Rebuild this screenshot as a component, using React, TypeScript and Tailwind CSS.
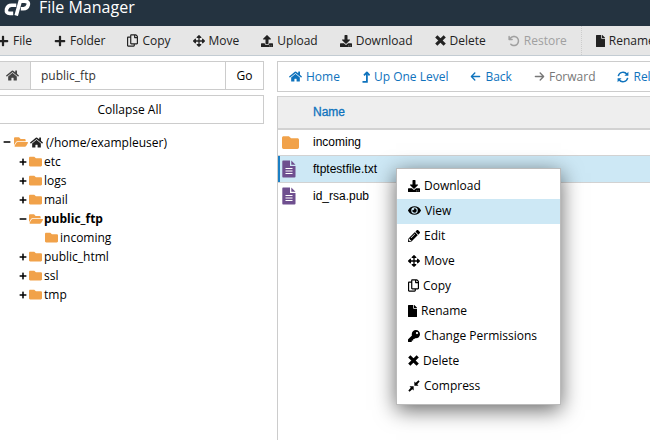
import React from "react";
import { FaPlus, FaArrowsAlt, FaUpload, FaDownload, FaHome, FaEye, FaFile, FaKey, FaFolder, FaFolderOpen, FaMinus, FaPencilAlt, FaRegCopy } from "react-icons/fa";
import { FaArrowLeft, FaArrowRight, FaArrowRotateLeft } from "react-icons/fa6";

type IconProps = { className?: string };

function TimesIcon({ className }: IconProps) {
  return (
    <svg viewBox="0 0 12 12" className={className} fill="none" stroke="currentColor" strokeWidth="3.4" aria-hidden="true">
      <path d="M2.6 2.6 L9.4 9.4 M9.4 2.6 L2.6 9.4" strokeLinecap="square" />
    </svg>
  );
}

function LevelUpIcon({ className }: IconProps) {
  return (
    <svg viewBox="0 0 8 12" className={className} fill="none" stroke="currentColor" strokeWidth="1.8" aria-hidden="true">
      <path d="M0.5 10.9 H4.9 V1.8" />
      <path d="M2 4.4 L4.9 1.4 L7.6 4.4" strokeLinejoin="round" />
    </svg>
  );
}

function ReloadIcon({ className }: IconProps) {
  return (
    <svg viewBox="0 0 14 14" className={className} fill="none" stroke="currentColor" strokeWidth="1.7" aria-hidden="true">
      <path d="M1.5 6 A5.6 5.6 0 0 1 11.5 3.8 M12.5 8 A5.6 5.6 0 0 1 2.5 10.2" />
      <path d="M13.3 1 V5.6 H8.7 Z M0.7 13 V8.4 H5.3 Z" fill="currentColor" stroke="none" />
    </svg>
  );
}

function CompressIcon({ className }: IconProps) {
  return (
    <svg viewBox="0 0 14 14" className={className} fill="currentColor" aria-hidden="true">
      <path d="M7.4 1.8 L9 3.2 L12.2 0.4 L13.6 1.8 L10.8 5 L12.2 6.6 H7.4 Z" />
      <path d="M6.6 12.2 L5 10.8 L1.8 13.6 L0.4 12.2 L3.2 9 L1.8 7.4 H6.6 Z" />
    </svg>
  );
}

function DocumentIcon() {
  return (
    <svg viewBox="0 0 14 18" className="h-[18px] w-[14px]" aria-hidden="true">
      <path d="M1 0.5 H8 V6 H13.5 V16.5 Q13.5 17.5 12.5 17.5 H1 Q0.3 17.5 0.3 16.5 V1.5 Q0.3 0.5 1 0.5 Z M9.3 0.5 L13.5 4.7 H9.3 Z" fill="#6f4f8f" />
      <path d="M3.5 8.5 H10.5 M3.5 11 H10.5 M3.5 13.5 H10.5" stroke="#fff" strokeWidth="1.2" />
    </svg>
  );
}

function Logo() {
  return (
    <svg viewBox="0 0 28 16" className="h-4 w-7 shrink-0" fill="none" stroke="#fff" strokeWidth="3.6" aria-hidden="true">
      <path d="M12.3 5.2 H7.5 Q3.6 5.2 2.5 9.3 Q1.8 13.4 5.8 13.4 H9.2" />
      <path d="M12.2 15.6 L16.2 1.2 H20.6 Q25.2 1.2 24.2 5 Q23.2 8.8 19.4 8.8 H16.8" />
    </svg>
  );
}

const tools = [
  { label: "File", icon: <FaPlus className="size-3" /> },
  { label: "Folder", icon: <FaPlus className="size-3" /> },
  { label: "Copy", icon: <FaRegCopy className="h-[13px] w-[11px]" /> },
  { label: "Move", icon: <FaArrowsAlt className="size-3" /> },
  { label: "Upload", icon: <FaUpload className="size-3" /> },
  { label: "Download", icon: <FaDownload className="size-3" /> },
  { label: "Delete", icon: <TimesIcon className="size-[11px]" /> },
  { label: "Restore", icon: <FaArrowRotateLeft className="size-3" />, disabled: true },
];

const navigation = [
  { label: "Home", icon: <FaHome className="size-[13px]" /> },
  { label: "Up One Level", icon: <LevelUpIcon className="h-3 w-2" /> },
  { label: "Back", icon: <FaArrowLeft className="size-[11px]" /> },
  { label: "Forward", icon: <FaArrowRight className="size-[11px]" />, disabled: true },
  { label: "Reload", icon: <ReloadIcon className="size-3" /> },
];

const folders = [
  { name: "etc" },
  { name: "logs" },
  { name: "mail" },
  { name: "public_ftp", open: true },
  { name: "incoming", nested: true },
  { name: "public_html" },
  { name: "ssl" },
  { name: "tmp" },
];

const files = [
  { name: "incoming", folder: true },
  { name: "ftptestfile.txt", selected: true },
  { name: "id_rsa.pub" },
];

const actions = [
  { label: "Download", icon: <FaDownload className="size-3" /> },
  { label: "View", icon: <FaEye className="h-[13px] w-[13px]" />, active: true },
  { label: "Edit", icon: <FaPencilAlt className="size-3" /> },
  { label: "Move", icon: <FaArrowsAlt className="size-3" /> },
  { label: "Copy", icon: <FaRegCopy className="h-[13px] w-[11px]" /> },
  { label: "Rename", icon: <FaFile className="h-3 w-[9px]" /> },
  { label: "Change Permissions", icon: <FaKey className="size-3" /> },
  { label: "Delete", icon: <TimesIcon className="size-[11px]" /> },
  { label: "Compress", icon: <CompressIcon className="size-3" /> },
];

export default function App() {
  return (
    <div className="flex min-h-screen flex-col overflow-hidden bg-white font-['Open_Sans',sans-serif] text-[12px] leading-[19px] text-black">
      <header className="flex h-[26px] items-start gap-[7px] bg-[#243340] px-1">
        <Logo />
        <h1 className="text-base leading-[14px] text-white">File Manager</h1>
      </header>

      <div className="flex h-[30px] overflow-hidden border-b border-[#c3ccd3] bg-[#e6e6e6]">
        <div className="-ml-[14px] flex shrink-0 pr-[3px]">
          {tools.map((tool) => (
            <button key={tool.label} disabled={tool.disabled} className="flex items-center gap-1 px-[11px] text-[#222] disabled:text-[#a0a0a0]">
              {tool.icon}
              {tool.label}
            </button>
          ))}
        </div>
        <button className="flex shrink-0 items-center gap-1 border-l border-dotted border-[#ccc] px-[14px] text-[#222]">
          <FaFile className="h-3 w-[9px]" />
          Rename
        </button>
      </div>

      <div className="flex flex-1 gap-[13px] pt-[5px]">
        <aside className="w-[264px] shrink-0">
          <form className="flex h-[29px] border-y border-r border-[#ccc]" onSubmit={(e) => e.preventDefault()}>
            <label htmlFor="path" aria-label="Path" className="flex w-[31px] items-center justify-center border-r border-[#ccc] bg-[#ebebeb] pr-[5px] text-[#444]">
              <FaHome className="size-[13px]" />
            </label>
            <input id="path" defaultValue="public_ftp" className="min-w-0 flex-1 px-[10px] text-[#333] outline-none" />
            <button className="w-[38px] border-l border-[#ccc]">Go</button>
          </form>
          <button className="mt-[5px] h-[29px] w-full border-y border-r border-[#ccc] pr-1">Collapse All</button>

          <ul className="pt-2 pl-[3px]">
            <li className="flex h-5 items-center">
              <FaMinus className="mr-[3px] size-2" />
              <FaFolderOpen className="mr-[2px] size-[14px] text-[#f1a24a]" />
              <FaHome className="mr-[3px] size-[13px] text-[#222]" />
              (/home/exampleuser)
            </li>
            {folders.map((folder) => (
              <li key={folder.name} className={folder.nested ? "flex h-[19px] items-center pl-[42px]" : "flex h-[19px] items-center pl-4"}>
                {!folder.nested && (folder.open ? <FaMinus className="mr-[2px] size-2" /> : <FaPlus className="mr-[2px] size-2" />)}
                {folder.open ? <FaFolderOpen className="mr-px size-[14px] text-[#f1a24a]" /> : <FaFolder className="mr-[2px] size-[13px] text-[#f1a24a]" />}
                <span className={folder.open ? "font-bold" : ""}>{folder.name}</span>
              </li>
            ))}
          </ul>
        </aside>

        <main className="flex min-w-0 flex-1 flex-col">
          <nav className="flex h-[31px] overflow-hidden border-y border-l border-[#ccc]">
            {navigation.map((item) => (
              <button key={item.label} disabled={item.disabled} className="flex shrink-0 items-center gap-1 px-[11px] text-[#0f73bd] disabled:text-[#777]">
                {item.icon}
                {item.label}
              </button>
            ))}
          </nav>

          <div className="mt-1 flex-1 border-l border-[#ccc]">
            <table className="w-full border-collapse text-left font-['Liberation_Sans',sans-serif]">
              <thead>
                <tr className="h-8 border-t border-b-2 border-[#d2d2d2] bg-[#eee]">
                  <th className="w-[35px]" aria-label="Type" />
                  <th className="font-normal text-[#0f73bd] [-webkit-text-stroke:0.3px]">Name</th>
                </tr>
              </thead>
              <tbody>
                {files.map((file) => (
                  <tr key={file.name} className={file.selected ? "h-[27px] border-y border-[#d2d2d2] bg-[#cde8f5] shadow-[inset_2px_0_0_#1b7fc4]" : "h-[27px]"}>
                    <td className="pl-1">
                      {file.folder ? <FaFolder className="size-[17px] text-[#f1a24a]" /> : <DocumentIcon />}
                    </td>
                    <td>{file.name}</td>
                  </tr>
                ))}
              </tbody>
            </table>
          </div>
        </main>
      </div>

      <menu className="absolute top-[168px] left-[396px] w-[165px] border border-[#bbb] bg-white py-[5px] shadow-[0_5px_20px_rgba(0,0,0,0.6)]">
        {actions.map((action) => (
          <li key={action.label}>
            <button className={action.active ? "flex h-[25px] w-full items-center gap-1 bg-[#cde8f5] px-[11px] pb-0.5" : "flex h-[25px] w-full items-center gap-1 px-[11px] pb-0.5"}>
              {action.icon}
              {action.label}
            </button>
          </li>
        ))}
      </menu>
    </div>
  );
}
